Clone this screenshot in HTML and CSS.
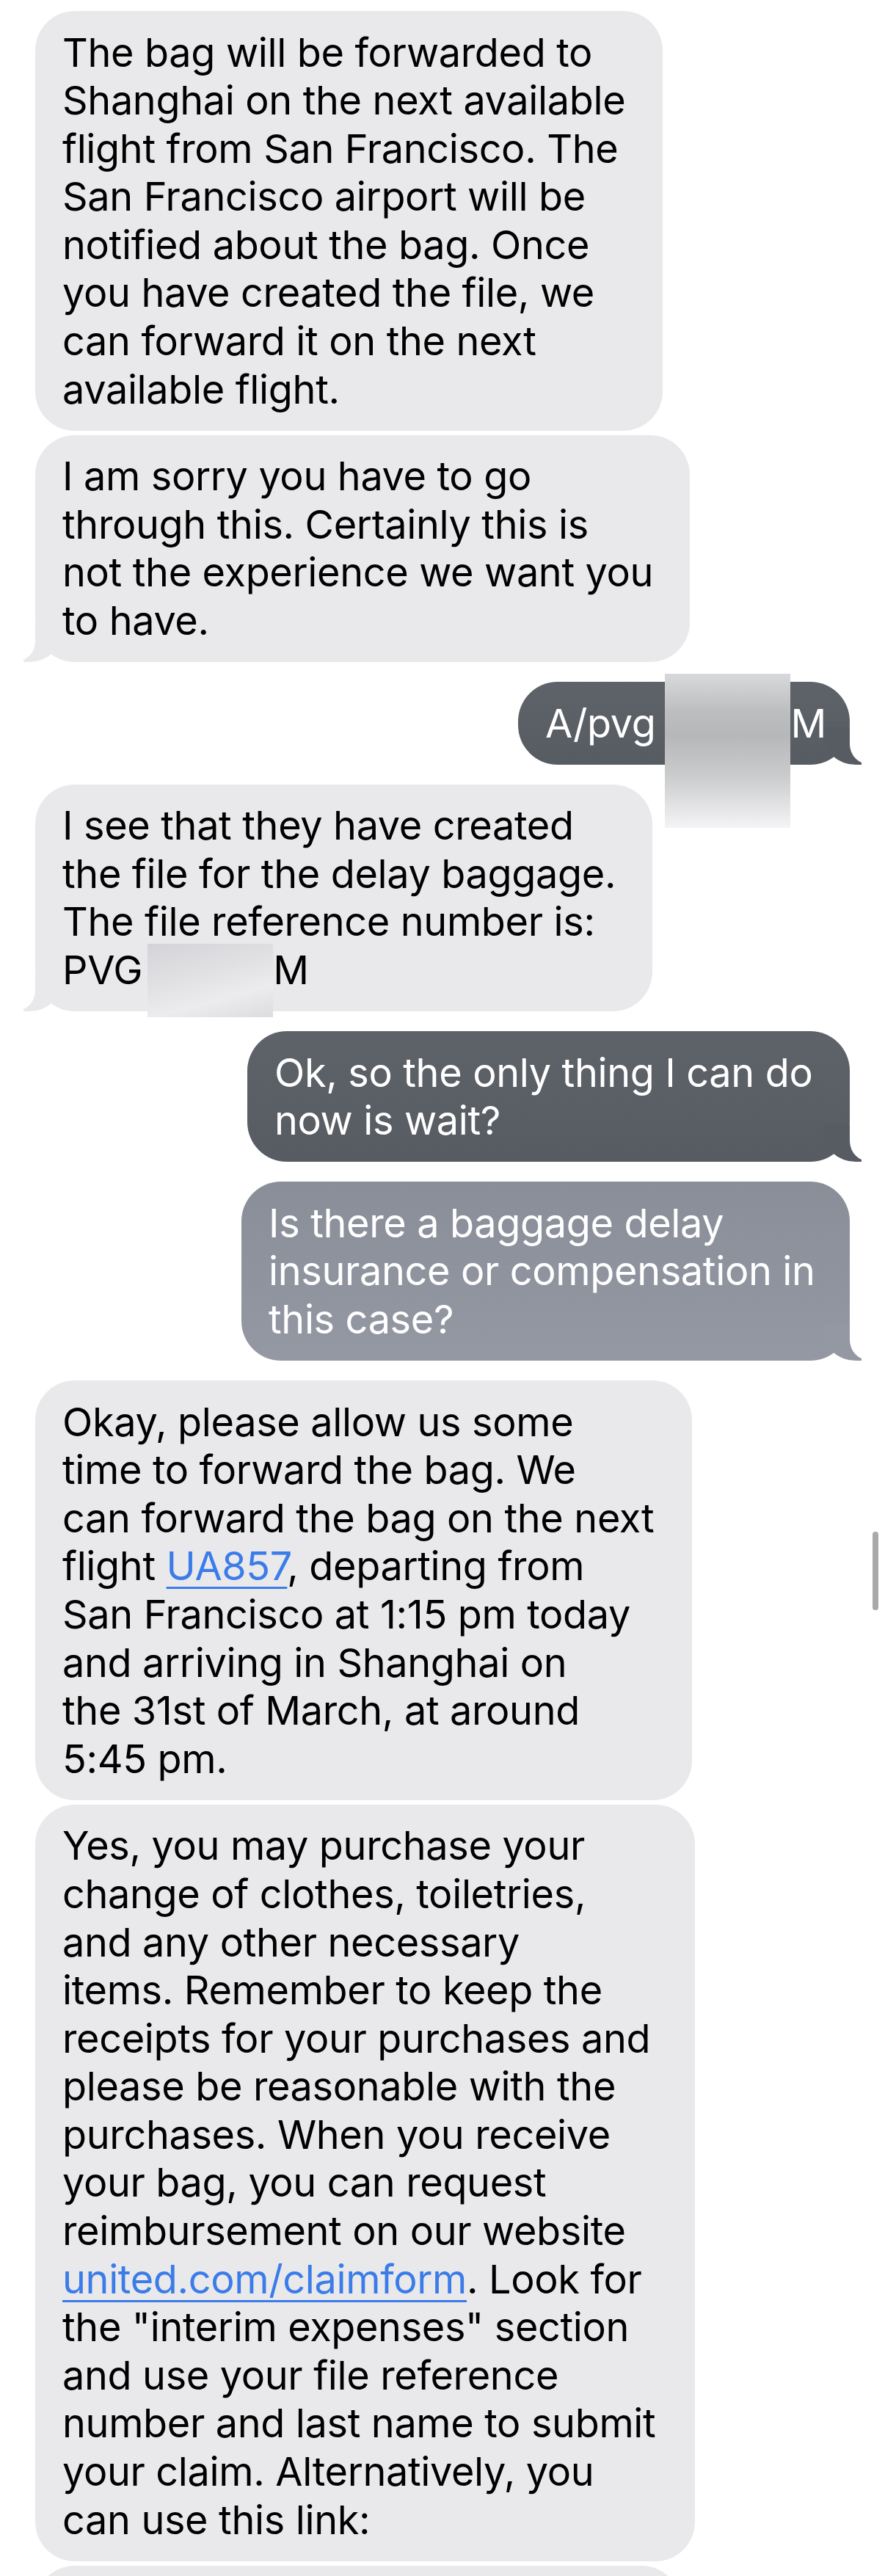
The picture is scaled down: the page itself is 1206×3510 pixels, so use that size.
FILE: index.html
```html
<!DOCTYPE html>
<html lang="en">
<head>
    <meta charset="UTF-8">
    <title>Messages</title>
    <link rel="stylesheet" href="styles.css">
</head>
<body>
    <div class="thread">
        <div class="msg received msg-forwarded">
            <p>The bag will be forwarded to<br>Shanghai on the next available<br>flight from San Francisco. The<br>San Francisco airport will be<br>notified about the bag. Once<br>you have created the file, we<br>can forward it on the next<br>available flight.</p>
        </div>
        <div class="msg received tail msg-sorry">
            <p>I am sorry you have to go<br>through this. Certainly this is<br>not the experience we want you<br>to have.</p>
        </div>

        <div class="msg sent dark tail new-group msg-code">
            <p>A/pvg<span class="redact redact-sent"></span>M</p>
        </div>

        <div class="msg received tail new-group msg-file">
            <p>I see that they have created<br>the file for the delay baggage.<br>The file reference number is:<br>PVG<span class="redact redact-ref"></span>M</p>
        </div>

        <div class="msg sent dark tail new-group msg-wait">
            <p>Ok, so the only thing I can do<br>now is wait?</p>
        </div>

        <div class="msg sent light tail new-group msg-insurance">
            <p>Is there a baggage delay<br>insurance or compensation in<br>this case?</p>
        </div>

        <div class="msg received new-group msg-flight">
            <p>Okay, please allow us some<br>time to forward the bag. We<br>can forward the bag on the next<br>flight <a href="#">UA857</a>, departing from<br>San Francisco at 1:15 pm today<br>and arriving in Shanghai on<br>the 31st of March, at around<br>5:45 pm.</p>
        </div>
        <div class="msg received msg-purchase">
            <p>Yes, you may purchase your<br>change of clothes, toiletries,<br>and any other necessary<br>items. Remember to keep the<br>receipts for your purchases and<br>please be reasonable with the<br>purchases. When you receive<br>your bag, you can request<br>reimbursement on our website<br><a href="#">united.com/claimform</a>. Look for<br>the "interim expenses" section<br>and use your file reference<br>number and last name to submit<br>your claim. Alternatively, you<br>can use this link:</p>
        </div>
        <div class="msg received msg-next"></div>
    </div>

    <div class="scroll-indicator"></div>
</body>
</html>
```

FILE: styles.css
```css
body {
    margin: 0;
    background-color: #fff;
    font-family: Inter, "Noto Sans", sans-serif;
}
.thread {
    display: flex;
    flex-direction: column;
    padding: 15px 48px 0;
}
.msg {
    position: relative;
    z-index: 0;
    box-sizing: border-box;
    padding: 23.5px 37px;
    border-radius: 54px;
    font-size: 54px;
    line-height: 65.6px;
    letter-spacing: -0.35px;
    margin-top: 6px;
}
.msg:first-child {
    margin-top: 0;
}
.msg p {
    margin: 0;
    white-space: nowrap;
}
.new-group {
    margin-top: 27px;
}
.received {
    align-self: flex-start;
    background-color: #e9e9eb;
    color: #000;
}
.sent {
    align-self: flex-end;
    color: #fff;
}
.sent.dark {
    background: linear-gradient(#5e6269, #575b62);
}
.sent.light {
    background: linear-gradient(#898e99, #9398a3);
}
.msg a {
    color: #3b7ce9;
    text-decoration: underline;
    text-decoration-thickness: 3px;
    text-underline-offset: 9px;
}

/* bubble tails */
.tail::before, .tail::after {
    content: "";
    position: absolute;
    z-index: -1;
    bottom: 0;
    height: 51px;
}
.received.tail::before {
    left: -16px;
    width: 52px;
    background-color: #e9e9eb;
    border-bottom-right-radius: 44px 40px;
}
.received.tail::after {
    left: -40px;
    width: 40px;
    background-color: #fff;
    border-bottom-right-radius: 28px;
}
.sent.tail::before {
    right: -16px;
    width: 52px;
    border-bottom-left-radius: 44px 40px;
}
.sent.dark.tail::before {
    background-color: #575b62;
}
.sent.light.tail::before {
    background-color: #9398a3;
}
.sent.tail::after {
    right: -40px;
    width: 40px;
    background-color: #fff;
    border-bottom-left-radius: 28px;
}

/* widths follow the screenshot */
.msg-forwarded { width: 855px; }
.msg-sorry { width: 892px; }
.msg-code { width: 452px; }
.msg-file { width: 841px; }
.msg-wait { width: 821px; }
.msg-insurance { width: 829px; }
.msg-flight { width: 895px; }
.msg-purchase { width: 899px; }
.msg-next { width: 880px; height: 120px; }

/* blurred-out parts */
.redact {
    display: inline-block;
    position: relative;
    height: 1px;
}
.redact::after {
    content: "";
    position: absolute;
}
.redact-sent {
    width: 184px;
}
.redact-sent::after {
    left: 13px;
    bottom: -123px;
    width: 171px;
    height: 210px;
    background: linear-gradient(#d8d9db 0%, #bcbdbf 25%, #b6b7b9 40%, #c9cacc 65%, #f4f4f6 100%);
}
.redact-ref {
    width: 178px;
}
.redact-ref::after {
    left: 7px;
    bottom: -45px;
    width: 171px;
    height: 100px;
    background: linear-gradient(165deg, #d4d4d8 0%, #e2e2e5 45%, #ececee 70%, #dcdcdf 100%);
}

.scroll-indicator {
    position: absolute;
    top: 2087px;
    left: 1189px;
    width: 8px;
    height: 107px;
    border-radius: 4px;
    background-color: #a9a9a9;
}
```
